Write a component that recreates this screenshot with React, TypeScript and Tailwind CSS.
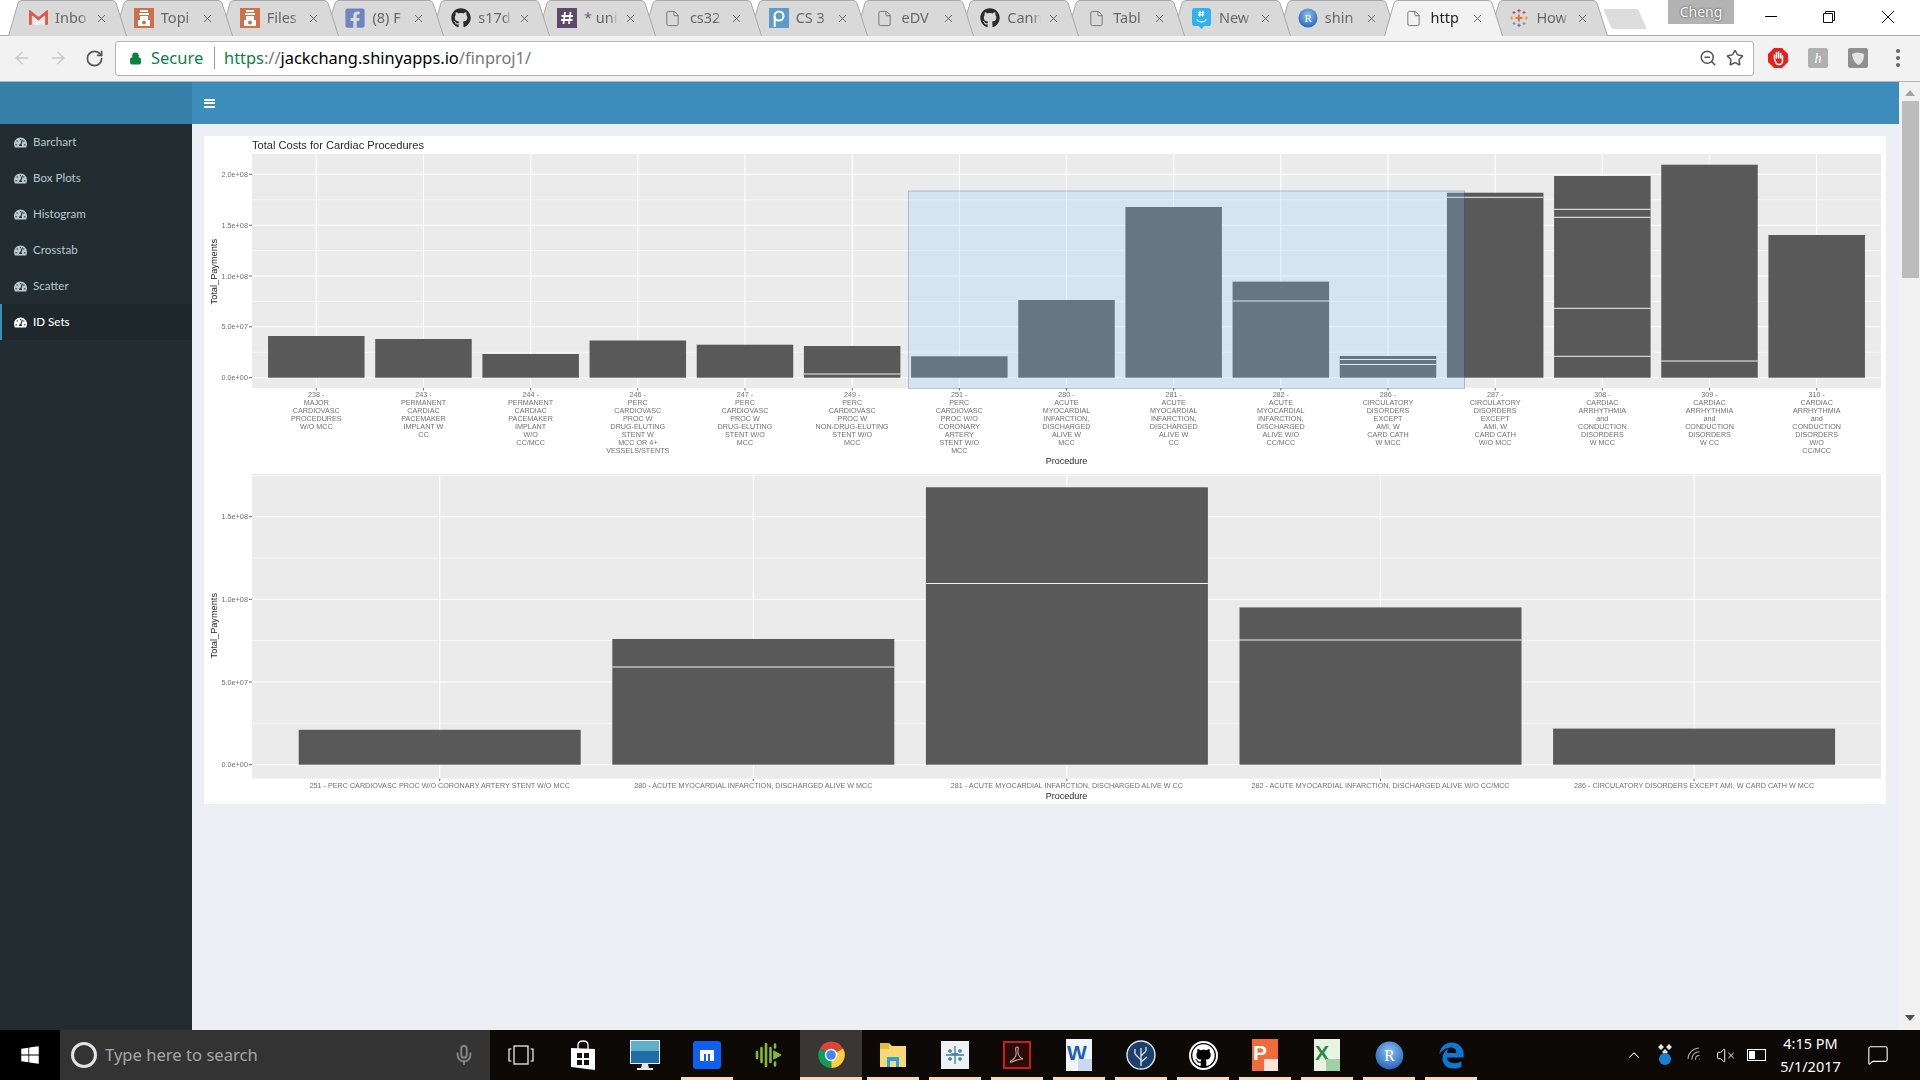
import { ArrowLeft, ArrowRight, RotateCw, X, File, Lock, ZoomOut, Star, Mic, ChevronUp, Wifi, VolumeX, MessageSquare } from "lucide-react";
import { FaGithub, FaFacebookSquare, FaTachometerAlt, FaWindows } from "react-icons/fa";
import { FaEdgeLegacy } from "react-icons/fa6";
import type { ReactNode } from "react";

const SANS = "font-['Noto_Sans','Open_Sans',sans-serif]";

/* favicons */
const DocIcon = () => <File className="w-[17px] h-[17px] text-[#777]" strokeWidth={1.4} />;
const Square = ({ bg, children }: { bg: string; children: ReactNode }) => (
  <svg viewBox="0 0 20 20" className="w-[20px] h-[20px]">
    <rect width="20" height="20" fill={bg} />
    {children}
  </svg>
);
const GmailIcon = () => (
  <svg viewBox="0 0 20 16" className="w-[19px] h-[16px]">
    <path d="M1.500 15V2l8.500 7 8.500-7v13" fill="none" stroke="#dd5a52" strokeWidth="3" />
    <path d="M4 15V6l6 5 6-5v9z" fill="#eee" />
  </svg>
);
const TempleIcon = () => (
  <Square bg="#d0704a">
    <path d="M6 2h8v2H6zM5 5h10v2H5zM6 8h8v4H6zM4 12h12v6H4z" fill="#fff" />
    <circle cx="10" cy="14.500" r="2" fill="#d0704a" />
  </Square>
);
const PiazzaIcon = () => (
  <Square bg="#5d9bcb">
    <circle cx="10" cy="8" r="4.500" fill="none" stroke="#fff" strokeWidth="2" />
    <path d="M5.700 8v11" stroke="#fff" strokeWidth="2" />
  </Square>
);
const SlackIcon = () => (
  <Square bg="#5b4a68">
    <path d="M8 4 6.500 16M13.500 4 12 16M4.500 8h11.500M4 12h11.500" stroke="#fff" strokeWidth="1.800" />
  </Square>
);
const GroupMeIcon = () => (
  <svg viewBox="0 0 20 22" className="w-[19px] h-[21px]">
    <path d="M3 0h14a3 3 0 0 1 3 3v13a3 3 0 0 1-3 3h-4l-3 3-3-3H3a3 3 0 0 1-3-3V3a3 3 0 0 1 3-3z" fill="#2fb3ee" />
    <path d="M8.500 3 8 9M11.500 3 11 9M6.500 4.800h6.500M6.300 7.200h6.500M5 12c2 3.500 8 3.500 10 0" stroke="#fff" strokeWidth="1.200" fill="none" />
  </svg>
);
const RGlobe = ({ size }: { size: string }) => (
  <svg viewBox="0 0 24 24" className={size}>
    <defs>
      <radialGradient id="rglobe" cx="50%" cy="35%" r="70%">
        <stop offset="0%" stopColor="#8fc0f0" />
        <stop offset="100%" stopColor="#1d5fb8" />
      </radialGradient>
    </defs>
    <circle cx="12" cy="12" r="11.500" fill="url(#rglobe)" />
    <text x="12" y="16.500" textAnchor="middle" fontSize="13" fill="#fff" fontFamily="'Liberation Serif', serif">R</text>
  </svg>
);
const TableauIcon = () => (
  <svg viewBox="0 0 20 20" className="w-[20px] h-[20px]" strokeWidth="1.100">
    <path d="M10 6.500v7M6.500 10h7" stroke="#e8762d" strokeWidth="2" />
    <path d="M10 1v3.500M8.200 2.700h3.600M10 15.500V19M8.200 17.300h3.600" stroke="#5b6f9e" />
    <path d="M1 10h3.500M2.700 8.200v3.600M15.500 10H19M17.300 8.200v3.600" stroke="#e0a03b" />
    <path d="M3.500 4.500h3M5 3v3M13.500 4.500h3M15 3v3" stroke="#c8475a" />
    <path d="M3.500 15.500h3M5 14v3M13.500 15.500h3M15 14v3" stroke="#59a0c0" />
  </svg>
);

const TABS: { label: string; icon: ReactNode }[] = [
  { label: "Inbo", icon: <GmailIcon /> },
  { label: "Topi", icon: <TempleIcon /> },
  { label: "Files", icon: <TempleIcon /> },
  { label: "(8) F", icon: <FaFacebookSquare className="w-[22px] h-[22px] text-[#6d86bd]" /> },
  { label: "s17d", icon: <FaGithub className="w-[20px] h-[20px] text-[#2b2b2b]" /> },
  { label: "* uni", icon: <SlackIcon /> },
  { label: "cs32", icon: <DocIcon /> },
  { label: "CS 3", icon: <PiazzaIcon /> },
  { label: "eDV", icon: <DocIcon /> },
  { label: "Cann", icon: <FaGithub className="w-[20px] h-[20px] text-[#2b2b2b]" /> },
  { label: "Tabl", icon: <DocIcon /> },
  { label: "New", icon: <GroupMeIcon /> },
  { label: "shin", icon: <RGlobe size="w-[20px] h-[20px]" /> },
  { label: "http", icon: <DocIcon /> },
  { label: "How", icon: <TableauIcon /> },
];

function Tab({ label, icon, index }: { label: string; icon: ReactNode; index: number }) {
  const active = index === 13;
  return (
    <div className="relative w-[119px] h-[36px] shrink-0 -mr-[13.2px]" style={{ zIndex: active ? 50 : 30 - index }}>
      <svg viewBox="0 0 119 36" className="absolute inset-0 w-full h-full">
        <path
          d="M0.500 36 L10 3 Q11 0.500 14 0.500 L104 0.500 Q107 0.500 108 3 L118.500 36"
          fill={active ? "#f2f2f2" : "#d9d9d9"}
          stroke="#a9a9a9"
        />
      </svg>
      <div className="relative flex items-center h-[35px] pt-[1px]">
        <div className="w-[22px] ml-[19px] flex justify-center">{icon}</div>
        <div className={`w-[34px] ml-[6px] whitespace-nowrap text-[14.5px] [mask-image:linear-gradient(to_right,black_75%,transparent)] ${active ? "text-[#222]" : "text-[#666]"}`}>
          {label}
        </div>
        <X className="w-[13px] h-[13px] ml-[6px] text-[#555]" strokeWidth={1.6} />
      </div>
    </div>
  );
}

function TabStrip() {
  return (
    <div className={`relative h-[36px] bg-white flex pl-[8px] ${SANS}`}>
      <div className="absolute left-0 right-0 bottom-0 h-px bg-[#a9a9a9]" />
      {TABS.map((t, i) => (
        <Tab key={i} index={i} label={t.label} icon={t.icon} />
      ))}
      <svg viewBox="0 0 44 22" className="absolute left-[1603px] top-[8px] w-[44px] h-[22px]">
        <path d="M3 1h30q2 0 3 2l7 16q1 2-2 2H11q-2 0-3-2L1 3q-1-2 2-2z" fill="#dcdcdc" />
      </svg>
      <div className="absolute left-[1668px] top-0 w-[66px] h-[24px] pb-[2px] bg-[#b3b3b3] flex items-center justify-center text-[14px] text-white [text-shadow:0_0_2px_#222]">
        Cheng
      </div>
      <div className="absolute left-[1765px] top-[16px] w-[12px] h-px bg-black" />
      <svg viewBox="0 0 12 12" className="absolute left-[1823px] top-[11px] w-[12px] h-[12px]" fill="none" stroke="#111">
        <path d="M0.500 2.500h9v9h-9zM2.500 2.500v-2h9v9h-2" />
      </svg>
      <svg viewBox="0 0 12 12" className="absolute left-[1882px] top-[11px] w-[12px] h-[12px]" stroke="#111">
        <path d="M0 0l12 12M12 0L0 12" />
      </svg>
    </div>
  );
}

function Toolbar() {
  return (
    <div className={`h-[46px] bg-[#f2f2f2] border-b border-[#b4b4b4] flex items-center pl-[4px] pr-[2px] pb-[1px] ${SANS}`}>
      <div className="w-[36px] flex justify-center"><ArrowLeft className="w-[20px] h-[20px] text-[#c8c8c8]" strokeWidth={1.6} /></div>
      <div className="w-[36px] flex justify-center"><ArrowRight className="w-[20px] h-[20px] text-[#c8c8c8]" strokeWidth={1.6} /></div>
      <div className="w-[36px] flex justify-center"><RotateCw className="w-[19px] h-[19px] text-[#555]" strokeWidth={2.2} /></div>
      <div className="ml-[3px] flex-1 h-[35px] bg-white border border-[#b4b4b4] rounded-[3px] flex items-center pl-[13px] pr-[9px]">
        <Lock className="w-[13px] h-[15px] text-[#0b8043] fill-[#0b8043]" strokeWidth={2} />
        <span className="ml-[9px] w-[63px] text-[16.5px] text-[#0b8043]">Secure</span>
        <div className="w-px h-[22px] bg-[#9a9a9a]" />
        <div className="ml-[9px] text-[16.4px] whitespace-nowrap">
          <span className="text-[#0b8043]">https</span>
          <span className="text-[#777]">://</span>
          <span className="text-black">jackchang.shinyapps.io</span>
          <span className="text-[#777]">/finproj1/</span>
        </div>
        <div className="ml-auto flex items-center gap-[9px]">
          <ZoomOut className="w-[18px] h-[18px] text-[#555]" strokeWidth={2} />
          <Star className="w-[18px] h-[18px] text-[#555]" strokeWidth={2} />
        </div>
      </div>
      <div className="ml-[4px] w-[40px] flex justify-center">
        <svg viewBox="0 0 20 20" className="w-[20px] h-[20px]">
          <path d="M6 0h8l6 6v8l-6 6H6l-6-6V6z" fill="#e8201c" />
          <path d="M6.500 11V7M8.500 10V4.500M10.600 10V4M12.700 10V5.500M6.500 11l1.500 4q1 1.500 3 1.500h.5q2.500 0 3-3V8" stroke="#fff" strokeWidth="1.500" fill="none" strokeLinecap="round" />
        </svg>
      </div>
      <div className="w-[40px] flex justify-center">
        <div className="w-[20px] h-[20px] rounded-[2px] bg-[#b0b0b0] flex items-center justify-center text-[14px] italic text-white font-['Liberation_Serif',serif]">h</div>
      </div>
      <div className="w-[40px] flex justify-center">
        <svg viewBox="0 0 20 20" className="w-[20px] h-[20px]">
          <rect width="20" height="20" rx="2" fill="#8f8f8f" />
          <path d="M4 6q5-3 12 0 0 8-5 11Q5 15 4 6z" fill="#e4e4e4" />
        </svg>
      </div>
      <div className="w-[40px] flex flex-col items-center gap-[3px]">
        <span className="w-[4px] h-[4px] rounded-full bg-[#666]" />
        <span className="w-[4px] h-[4px] rounded-full bg-[#666]" />
        <span className="w-[4px] h-[4px] rounded-full bg-[#666]" />
      </div>
    </div>
  );
}

const NAV = ["Barchart", "Box Plots", "Histogram", "Crosstab", "Scatter", "ID Sets"];

function Sidebar() {
  return (
    <aside className="w-[192px] shrink-0 bg-[#222d32] font-['Lato',sans-serif]">
      {NAV.map((n) => {
        const active = n === "ID Sets";
        return (
          <div
            key={n}
            className={`h-[36px] flex items-center text-[11.6px] border-l-2 ${
              active ? "bg-[#1e282c] border-[#3c8dbc] text-white font-medium" : "border-transparent text-[#b8c7ce]"
            }`}
          >
            <FaTachometerAlt className="ml-[12px] w-[13px] h-[13px]" />
            <span className="ml-[6px]">{n}</span>
          </div>
        );
      })}
    </aside>
  );
}

/* plots use page coordinates through their viewBox */
const PANEL_L = 252;
const PANEL_R = 1881;
const LABEL = "#707070";
const TITLE = "#2a2a2a";
const CHART_FONT = "'Liberation Sans', Arial, sans-serif";

const TOP_BARS: { top: number; lines: number[]; label: string[] }[] = [
  { top: 336, lines: [], label: ["238 -", "MAJOR", "CARDIOVASC", "PROCEDURES", "W/O MCC"] },
  { top: 339, lines: [], label: ["243 -", "PERMANENT", "CARDIAC", "PACEMAKER", "IMPLANT W", "CC"] },
  { top: 354, lines: [], label: ["244 -", "PERMANENT", "CARDIAC", "PACEMAKER", "IMPLANT", "W/O", "CC/MCC"] },
  { top: 340.5, lines: [], label: ["246 -", "PERC", "CARDIOVASC", "PROC W", "DRUG-ELUTING", "STENT W", "MCC OR 4+", "VESSELS/STENTS"] },
  { top: 344.7, lines: [], label: ["247 -", "PERC", "CARDIOVASC", "PROC W", "DRUG-ELUTING", "STENT W/O", "MCC"] },
  { top: 346, lines: [374], label: ["249 -", "PERC", "CARDIOVASC", "PROC W", "NON-DRUG-ELUTING", "STENT W/O", "MCC"] },
  { top: 356.3, lines: [], label: ["251 -", "PERC", "CARDIOVASC", "PROC W/O", "CORONARY", "ARTERY", "STENT W/O", "MCC"] },
  { top: 300, lines: [], label: ["280 -", "ACUTE", "MYOCARDIAL", "INFARCTION,", "DISCHARGED", "ALIVE W", "MCC"] },
  { top: 207, lines: [], label: ["281 -", "ACUTE", "MYOCARDIAL", "INFARCTION,", "DISCHARGED", "ALIVE W", "CC"] },
  { top: 281.6, lines: [301], label: ["282 -", "ACUTE", "MYOCARDIAL", "INFARCTION,", "DISCHARGED", "ALIVE W/O", "CC/MCC"] },
  { top: 356, lines: [359.5, 364.5], label: ["286 -", "CIRCULATORY", "DISORDERS", "EXCEPT", "AMI, W", "CARD CATH", "W MCC"] },
  { top: 192.7, lines: [197.3], label: ["287 -", "CIRCULATORY", "DISORDERS", "EXCEPT", "AMI, W", "CARD CATH", "W/O MCC"] },
  { top: 176, lines: [209.3, 217.3, 308.3, 356.3], label: ["308 -", "CARDIAC", "ARRHYTHMIA", "and", "CONDUCTION", "DISORDERS", "W MCC"] },
  { top: 164.7, lines: [361], label: ["309 -", "CARDIAC", "ARRHYTHMIA", "and", "CONDUCTION", "DISORDERS", "W CC"] },
  { top: 235, lines: [], label: ["310 -", "CARDIAC", "ARRHYTHMIA", "and", "CONDUCTION", "DISORDERS", "W/O", "CC/MCC"] },
];

const BOTTOM_BARS: { top: number; lines: number[]; label: string }[] = [
  { top: 729.8, lines: [], label: "251 - PERC CARDIOVASC PROC W/O CORONARY ARTERY STENT W/O MCC" },
  { top: 639, lines: [667], label: "280 - ACUTE MYOCARDIAL INFARCTION, DISCHARGED ALIVE W MCC" },
  { top: 487.3, lines: [583.5], label: "281 - ACUTE MYOCARDIAL INFARCTION, DISCHARGED ALIVE W CC" },
  { top: 607.4, lines: [640], label: "282 - ACUTE MYOCARDIAL INFARCTION, DISCHARGED ALIVE W/O CC/MCC" },
  { top: 728.6, lines: [], label: "286 - CIRCULATORY DISORDERS EXCEPT AMI, W CARD CATH W MCC" },
];

function Grid({ top, bottom, ticks, minors, xs }: { top: number; bottom: number; ticks: [string, number][]; minors: number[]; xs: number[] }) {
  return (
    <g>
      <rect x={PANEL_L} y={top} width={PANEL_R - PANEL_L} height={bottom - top} fill="#ebebeb" />
      {minors.map((y) => (
        <line key={y} x1={PANEL_L} x2={PANEL_R} y1={y} y2={y} stroke="#fff" strokeWidth="0.600" />
      ))}
      {ticks.map(([t, y]) => (
        <g key={t}>
          <line x1={PANEL_L} x2={PANEL_R} y1={y} y2={y} stroke="#fff" strokeWidth="1.100" />
          <line x1={249} x2={PANEL_L} y1={y} y2={y} stroke="#444" strokeWidth="0.800" />
          <text x={248} y={y + 2.5} textAnchor="end" fontSize="7.300" fill={LABEL}>{t}</text>
        </g>
      ))}
      {xs.map((x) => (
        <g key={x}>
          <line x1={x} x2={x} y1={top} y2={bottom} stroke="#fff" strokeWidth="1.100" />
          <line x1={x} x2={x} y1={bottom} y2={bottom + 2.5} stroke="#444" strokeWidth="0.800" />
        </g>
      ))}
    </g>
  );
}

function Bar({ x, w, top, zero, lines }: { x: number; w: number; top: number; zero: number; lines: number[] }) {
  return (
    <g>
      <rect x={x - w / 2} y={top} width={w} height={zero - top} fill="#595959" />
      {lines.map((y) => (
        <line key={y} x1={x - w / 2} x2={x + w / 2} y1={y} y2={y} stroke="#f2f2f2" strokeWidth="1" />
      ))}
    </g>
  );
}

function TopPlot() {
  const xs = TOP_BARS.map((_, i) => 316.3 + i * 107.17);
  return (
    <svg viewBox="204 136 1682 334" className="block w-[1682px] h-[334px] blur-[0.35px]" fontFamily={CHART_FONT}>
      <text x={252} y={149} fontSize="11.100" fill={TITLE}>Total Costs for Cardiac Procedures</text>
      <Grid
        top={154}
        bottom={388}
        xs={xs}
        ticks={[["2.0e+08", 174.3], ["1.5e+08", 225.3], ["1.0e+08", 276], ["5.0e+07", 326.8], ["0.0e+00", 377.7]]}
        minors={[199.8, 250.6, 301.4, 352.2]}
      />
      {TOP_BARS.map((b, i) => (
        <Bar key={i} x={xs[i]} w={96.5} top={b.top} zero={377.7} lines={b.lines} />
      ))}
      {TOP_BARS.map((b, i) =>
        b.label.map((l, j) => (
          <text key={j + l + i} x={xs[i]} y={396.5 + j * 8} textAnchor="middle" fontSize="7.200" fill={LABEL}>{l}</text>
        ))
      )}
      <rect x={908.5} y={191} width={556} height={197.5} fill="#99ccff" fillOpacity="0.25" stroke="#003366" strokeOpacity="0.25" />
      <text transform="translate(216.500 271.700) rotate(-90)" textAnchor="middle" fontSize="9.200" fill={TITLE}>Total_Payments</text>
      <text x={1066.500} y={463.500} textAnchor="middle" fontSize="9" fill={TITLE}>Procedure</text>
    </svg>
  );
}

function BottomPlot() {
  const xs = BOTTOM_BARS.map((_, i) => 439.7 + i * 313.6);
  return (
    <svg viewBox="204 470 1682 334" className="block w-[1682px] h-[334px] blur-[0.35px]" fontFamily={CHART_FONT}>
      <Grid
        top={474}
        bottom={778.7}
        xs={xs}
        ticks={[["1.5e+08", 516.7], ["1.0e+08", 599.3], ["5.0e+07", 682], ["0.0e+00", 764.7]]}
        minors={[475.5, 558, 640.6, 723.3]}
      />
      {BOTTOM_BARS.map((b, i) => (
        <Bar key={i} x={xs[i]} w={282} top={b.top} zero={764.7} lines={b.lines} />
      ))}
      {BOTTOM_BARS.map((b, i) => (
        <text key={i} x={xs[i]} y={787.8} textAnchor="middle" fontSize="7.200" fill={LABEL}>{b.label}</text>
      ))}
      <text transform="translate(216.500 625.700) rotate(-90)" textAnchor="middle" fontSize="9.200" fill={TITLE}>Total_Payments</text>
      <text x={1066.500} y={799} textAnchor="middle" fontSize="9" fill={TITLE}>Procedure</text>
    </svg>
  );
}

function Scrollbar() {
  return (
    <div className="w-[21px] shrink-0 bg-[#f1f1f1] flex flex-col items-center pl-[1px]">
      <svg viewBox="0 0 10 6" className="mt-[8px] w-[10px] h-[6px]"><path d="M5 0l5 6H0z" fill="#a3a3a3" /></svg>
      <div className="mt-[5px] w-[17px] h-[177px] bg-[#bcbcbc]" />
      <svg viewBox="0 0 10 6" className="mt-auto mb-[9px] w-[10px] h-[6px]"><path d="M0 0h10L5 6z" fill="#505050" /></svg>
    </div>
  );
}

/* taskbar icons */
const DocShape = ({ bg, letter, color, corner }: { bg: string; letter: string; color: string; corner: string }) => (
  <div className={`relative w-[26px] h-[32px] ${bg} pl-[1px] font-['Liberation_Sans',sans-serif] font-bold text-[21px] leading-[28px] ${color}`}>
    {letter}
    <div className={`absolute right-0 bottom-0 w-[14px] h-[12px] ${corner}`} />
  </div>
);

const TASK_ICONS: { icon: ReactNode; run?: boolean; active?: boolean }[] = [
  {
    icon: (
      <svg viewBox="0 0 26 20" className="w-[26px] h-[20px]" fill="none" stroke="#fff" strokeWidth="1.200">
        <rect x="6" y="1" width="14" height="18" />
        <path d="M3.500 4H1v12h2.500M22.500 4H25v12h-2.500" />
      </svg>
    ),
  },
  {
    icon: (
      <svg viewBox="0 0 26 30" className="w-[26px] h-[30px]">
        <path d="M1 8l24 1v21L1 27z" fill="#fff" />
        <path d="M8 9V5q0-4 5-4t5 4v4" stroke="#fff" strokeWidth="1.300" fill="none" />
        <path d="M7 13h5v5H7zM14 13h5v5h-5zM7 20h5v5H7zM14 20h5v5h-5z" fill="#111" />
      </svg>
    ),
  },
  {
    icon: (
      <svg viewBox="0 0 30 30" className="w-[30px] h-[30px]">
        <rect width="30" height="24" fill="#e9eef2" />
        <rect x="1" y="1" width="28" height="22" fill="#1f6ea8" />
        <rect x="1" y="1" width="28" height="10" fill="#5fb0c8" />
        <path d="M12 24h6l1 4h4v2H7v-2h4z" fill="#e6e6e6" />
      </svg>
    ),
  },
  {
    run: true,
    icon: (
      <svg viewBox="0 0 28 28" className="w-[28px] h-[28px]">
        <rect width="28" height="28" rx="3" fill="#1060f0" />
        <path d="M7 20V9h14v11h-4v-7h-2v7h-2v-7h-2v7z" fill="#fff" />
      </svg>
    ),
  },
  {
    icon: (
      <svg viewBox="0 0 28 28" className="w-[28px] h-[28px]" stroke="#86b832" strokeWidth="2.600" strokeLinecap="round">
        <path d="M2 11v6M6.500 7v14M11 3v22M15.500 7v14" />
        <path d="M19 10l7 4-7 4z" fill="#86b832" strokeWidth="1" />
        <path d="M20 3.500v3M20 21.500v3" />
      </svg>
    ),
  },
  {
    run: true,
    active: true,
    icon: (
      <svg viewBox="0 0 28 28" className="w-[28px] h-[28px]">
        <path d="M14 14 3 7.500A13 13 0 0 1 26 7.500z" fill="#db4437" />
        <path d="M14 14 14.500 27A13 13 0 0 1 3 7.500z" fill="#0f9d58" />
        <path d="M14 14 26 7.500A13 13 0 0 1 14.500 27z" fill="#ffcd40" />
        <circle cx="14" cy="14" r="6.200" fill="#fff" />
        <circle cx="14" cy="14" r="4.800" fill="#4285f4" />
      </svg>
    ),
  },
  {
    run: true,
    icon: (
      <svg viewBox="0 0 28 28" className="w-[28px] h-[28px]">
        <path d="M1 2h9l3 3h14v21H1z" fill="#f8d775" />
        <path d="M1 2h9v6H1z" fill="#e8b93c" />
        <path d="M8 16h12v10h-3v-6h-6v6H8z" fill="#2e9fd8" />
      </svg>
    ),
  },
  {
    run: true,
    icon: (
      <svg viewBox="0 0 28 28" className="w-[28px] h-[28px]">
        <rect width="28" height="28" fill="#eef2f4" />
        <path d="M14 5v18M5 14h18M9 8v4M7 10h4M19 8v4M17 10h4M9 16v4M7 18h4M19 16v4M17 18h4M10.500 13h7" stroke="#3b7ea8" strokeWidth="1.300" />
      </svg>
    ),
  },
  {
    run: true,
    icon: (
      <svg viewBox="0 0 28 28" className="w-[28px] h-[28px]">
        <rect x="1" y="1" width="26" height="26" fill="#2a0d0b" stroke="#c81e1e" strokeWidth="2" />
        <path d="M14 6q-2 0-1 5t-5 9q-2 2 1 1 6-3 11-3-6-3-5-9 1-3-1-3z" fill="none" stroke="#c8a8a0" strokeWidth="1.100" />
      </svg>
    ),
  },
  { run: true, icon: <DocShape bg="bg-[#f2f5fa]" letter="W" color="text-[#1f5eb5]" corner="bg-[#c9d9ef]" /> },
  {
    run: true,
    icon: (
      <svg viewBox="0 0 30 30" className="w-[30px] h-[30px]">
        <circle cx="15" cy="15" r="14" fill="#1d3f6e" stroke="#e0e6ee" strokeWidth="1.400" />
        <path d="M15 26V8M15 20l-6-6M15 16l5-5M15 22l6-5M9 14V9M20 11V7" stroke="#dfe7ef" strokeWidth="1.300" fill="none" />
      </svg>
    ),
  },
  {
    run: true,
    icon: (
      <div className="w-[29px] h-[29px] rounded-full border-2 border-white bg-black flex items-center justify-center">
        <FaGithub className="w-[23px] h-[23px] text-white" />
      </div>
    ),
  },
  { run: true, icon: <DocShape bg="bg-[#ef6b3a]" letter="P" color="text-white" corner="bg-[#fbe3d8]" /> },
  { run: true, icon: <DocShape bg="bg-[#e8f3e4]" letter="X" color="text-[#2a8a46]" corner="bg-[#9fd0a8]" /> },
  { run: true, icon: <RGlobe size="w-[29px] h-[29px]" /> },
  { run: true, icon: <FaEdgeLegacy className="w-[27px] h-[29px] text-[#0a78d4]" /> },
];

function Taskbar() {
  return (
    <div className={`h-[50px] shrink-0 bg-[#0d0907] flex text-white ${SANS}`}>
      <div className="w-[60px] bg-black flex items-center justify-center">
        <FaWindows className="w-[20px] h-[20px]" />
      </div>
      <div className="w-[430px] bg-[#333333] flex items-center pl-[11px]">
        <div className="w-[26px] h-[26px] rounded-full border-[3px] border-[#e2e2e2]" />
        <span className="ml-[8px] text-[16.6px] text-[#a6a6a6]">Type here to search</span>
        <Mic className="ml-auto mr-[15px] w-[22px] h-[24px] text-[#8a8a8a]" strokeWidth={2} />
      </div>
      {TASK_ICONS.map((t, i) => (
        <div key={i} className={`relative w-[62px] flex items-center justify-center ${t.active ? "bg-[#3a3634]" : ""}`}>
          {t.icon}
          {t.run && <div className={`absolute bottom-0 h-[3px] bg-[#fad9b5] ${t.active ? "left-0 right-0" : "left-[5px] right-[5px]"}`} />}
        </div>
      ))}
      <div className="ml-auto flex items-center">
        <div className="w-[30.5px] flex justify-center"><ChevronUp className="w-[18px] h-[18px]" strokeWidth={1.4} /></div>
        <div className="w-[30.5px] flex justify-center">
          <svg viewBox="0 0 18 24" className="w-[18px] h-[24px]">
            <path d="M5 1l3 3-3 3-3-3zM13 1l3 3-3 3-3-3zM9 6l3 3-3 3-3-3z" fill="#e8e8e8" />
            <circle cx="9" cy="16" r="6" fill="#1a7fd0" />
          </svg>
        </div>
        <div className="w-[30.5px] flex justify-center"><Wifi className="w-[18px] h-[18px] text-[#b0b0b0] -rotate-45" strokeWidth={1.4} /></div>
        <div className="w-[30.5px] flex justify-center"><VolumeX className="w-[19px] h-[19px]" strokeWidth={1.2} /></div>
        <div className="w-[30.5px] flex justify-center">
          <div className="w-[19px] h-[12px] border border-white flex pl-[1px] py-[1px]"><div className="w-[6px] bg-white" /></div>
        </div>
        <div className="w-[78px] flex flex-col items-center text-[14.5px] leading-[23px]">
          <span>4:15 PM</span>
          <span>5/1/2017</span>
        </div>
        <div className="w-[70.5px] pr-[14px] flex justify-center">
          <MessageSquare className="w-[22px] h-[24px]" strokeWidth={1.2} />
        </div>
      </div>
    </div>
  );
}

export default function App() {
  return (
    <div className="w-[1920px] h-[1080px] flex flex-col overflow-hidden bg-white">
      <TabStrip />
      <Toolbar />
      <div className="flex-1 flex min-h-0">
        <div className="flex-1 flex flex-col min-w-0">
          <header className="h-[42px] shrink-0 flex bg-[#3c8dbc]">
            <div className="w-[192px] bg-[#367fa9]" />
            <div className="ml-[12px] flex flex-col justify-center gap-[1.5px]">
              <span className="block w-[11px] h-[2px] bg-white" />
              <span className="block w-[11px] h-[2px] bg-white" />
              <span className="block w-[11px] h-[2px] bg-white" />
            </div>
          </header>
          <div className="flex-1 flex min-h-0">
            <Sidebar />
            <main className="flex-1 bg-[#ecf0f5] pt-[12px] pl-[12px]">
              <div className="w-[1682px] h-[668px] bg-white">
                <TopPlot />
                <BottomPlot />
              </div>
            </main>
          </div>
        </div>
        <Scrollbar />
      </div>
      <Taskbar />
    </div>
  );
}
